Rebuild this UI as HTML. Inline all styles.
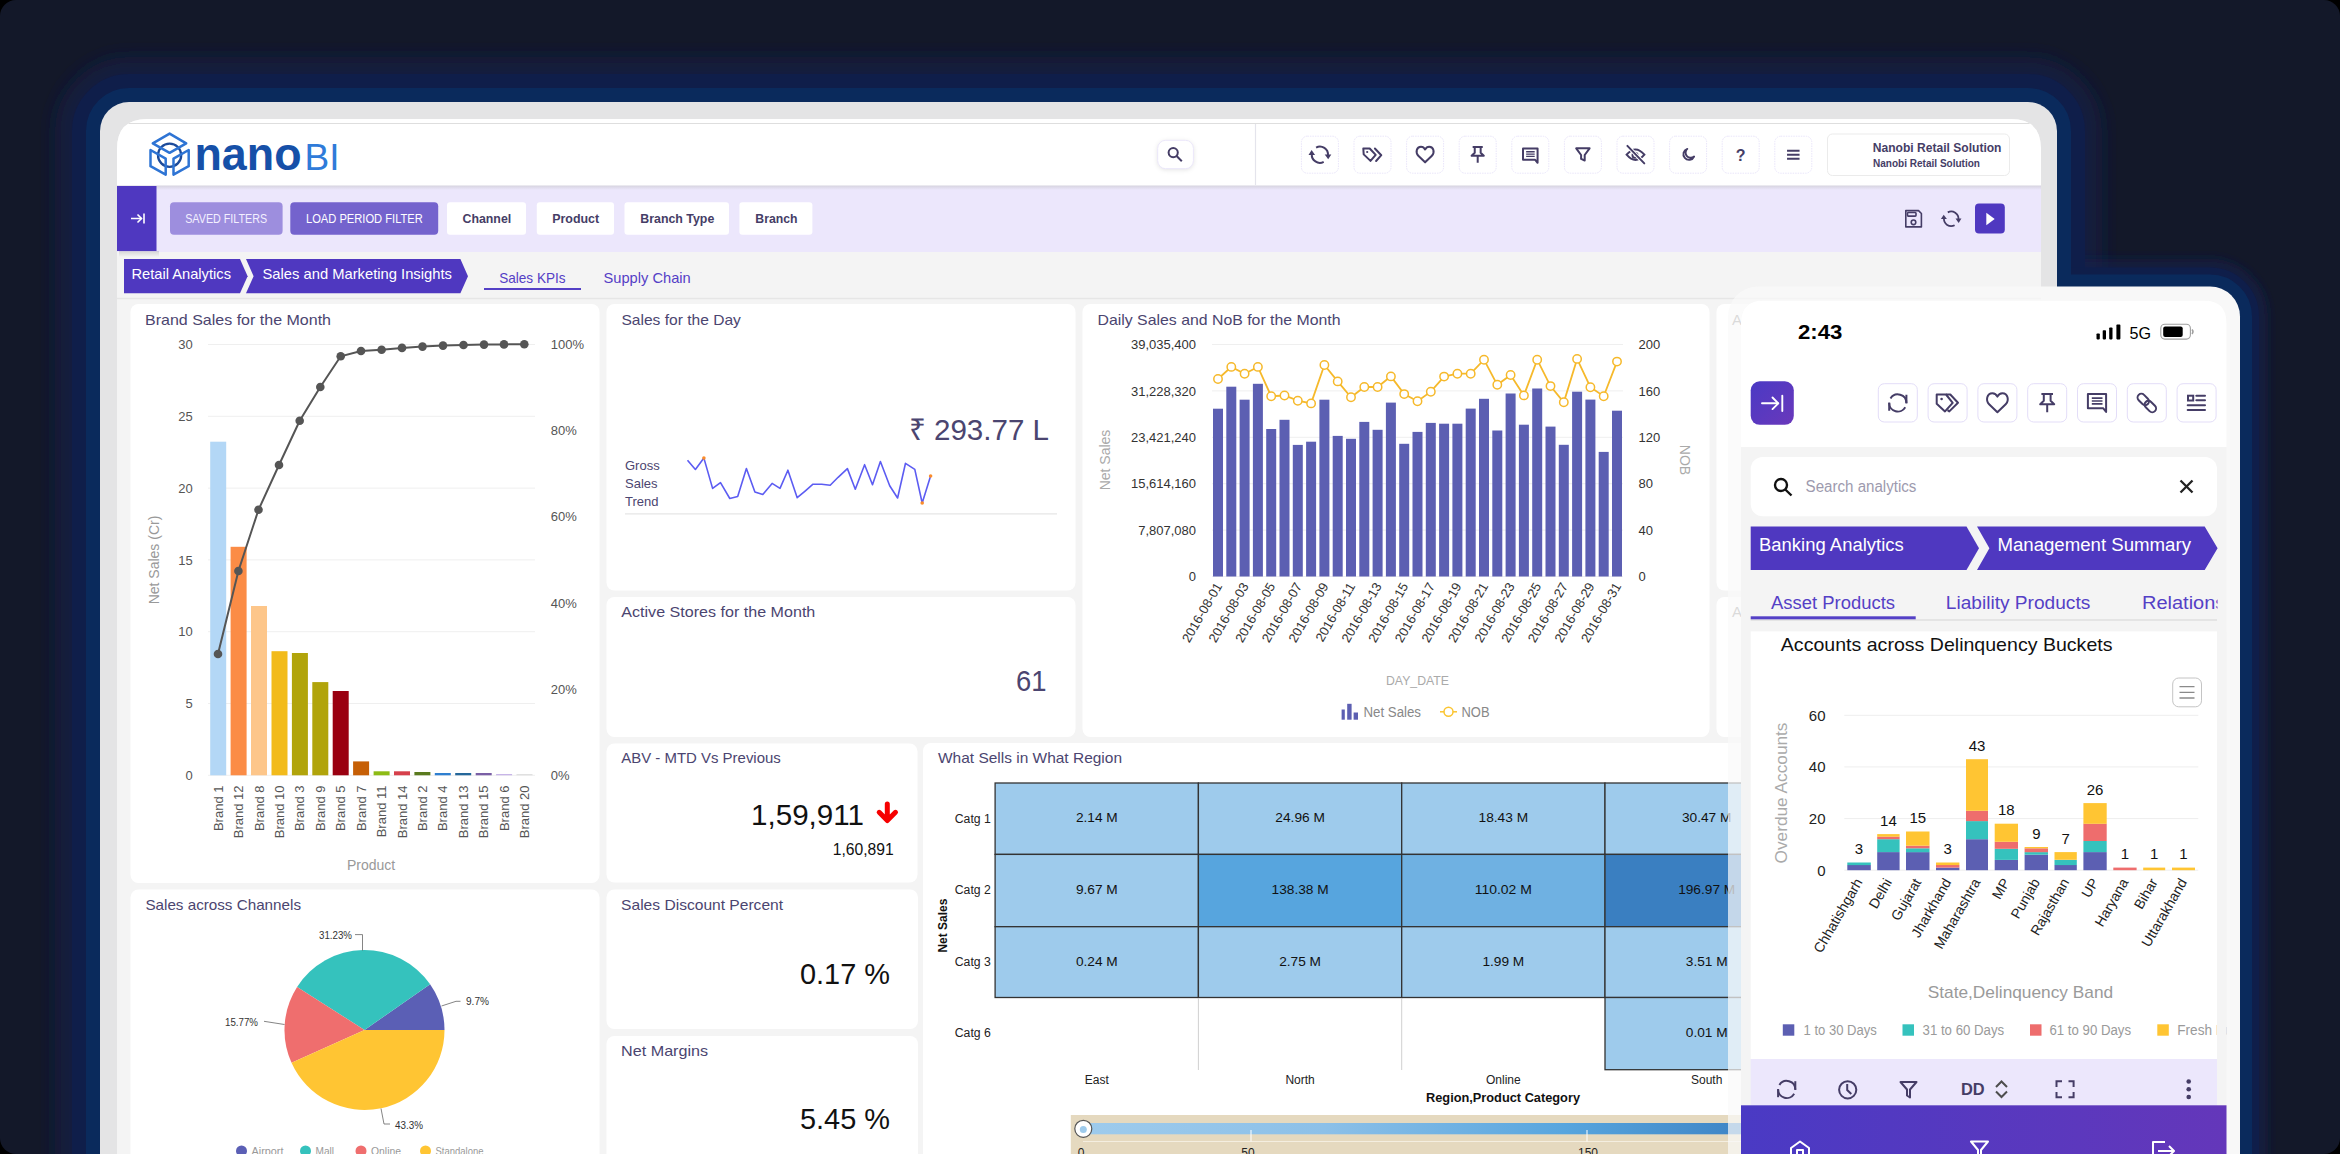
<!DOCTYPE html>
<html><head><meta charset="utf-8"><title>nanoBI</title>
<style>
html,body{margin:0;padding:0;background:#000;width:2340px;height:1154px;overflow:hidden}
#bg{position:absolute;left:0;top:0;width:2340px;height:1154px;background:#131829;border-radius:16px;overflow:hidden}
.glow{position:absolute}
svg{position:absolute;left:0;top:0}
svg text{font-family:"Liberation Sans", sans-serif}
</style></head><body>
<div id="bg">
<svg width="2340" height="1154" viewBox="0 0 2340 1154">
<defs>
<clipPath id="scr"><path d="M117,149 Q117,119 147,119 L2011,119 Q2041,119 2041,149 L2041,1154 L117,1154 Z"/></clipPath>
<clipPath id="pscr"><path d="M1741,323 Q1741,300.5 1763.5,300.5 L2204,300.5 Q2226.5,300.5 2226.5,323 L2226.5,1154 L1741,1154 Z"/></clipPath>
<linearGradient id="pg" x1="0" y1="0" x2="1" y2="1"><stop offset="0" stop-color="#4a3ac4"/><stop offset="1" stop-color="#6a38bb"/></linearGradient>
<linearGradient id="navg" x1="0" y1="0" x2="1" y2="0"><stop offset="0" stop-color="#4a3ac4"/><stop offset="1" stop-color="#6437ba"/></linearGradient>
<linearGradient id="heatg" x1="0" y1="0" x2="1" y2="0"><stop offset="0" stop-color="#9ecbec"/><stop offset="0.35" stop-color="#8cc0e8"/><stop offset="0.7" stop-color="#57a5de"/><stop offset="1" stop-color="#3a7fc1"/></linearGradient>
<filter id="gblur" x="-10%" y="-10%" width="120%" height="120%"><feGaussianBlur stdDeviation="9"/></filter><filter id="gblur2" x="-10%" y="-10%" width="120%" height="120%"><feGaussianBlur stdDeviation="5"/></filter>
</defs>
<path d="M100,1300 L100,131 A29,29 0 0 1 129,102 L2028,102 A29,29 0 0 1 2057,131 L2057,1300 Z" fill="none" stroke="rgba(14,30,78,0.55)" stroke-width="90" stroke-linejoin="round" filter="url(#gblur)"/>
<path d="M1728,1300 L1728,316.5 A30,30 0 0 1 1758,286.5 L2210,286.5 A30,30 0 0 1 2240,316.5 L2240,1300 Z" fill="none" stroke="rgba(14,30,78,0.55)" stroke-width="56" stroke-linejoin="round" filter="url(#gblur2)"/>
<path d="M100,1300 L100,131 A29,29 0 0 1 129,102 L2028,102 A29,29 0 0 1 2057,131 L2057,1300 Z" fill="none" stroke="#0f1e4a" stroke-width="56" stroke-linejoin="round"/>
<path d="M1728,1300 L1728,316.5 A30,30 0 0 1 1758,286.5 L2210,286.5 A30,30 0 0 1 2240,316.5 L2240,1300 Z" fill="none" stroke="#0f1e4a" stroke-width="38" stroke-linejoin="round"/>
<path d="M100,1300 L100,131 A29,29 0 0 1 129,102 L2028,102 A29,29 0 0 1 2057,131 L2057,1300 Z" fill="none" stroke="#0a2a5c" stroke-width="28" stroke-linejoin="round"/>
<path d="M1728,1300 L1728,316.5 A30,30 0 0 1 1758,286.5 L2210,286.5 A30,30 0 0 1 2240,316.5 L2240,1300 Z" fill="none" stroke="#0a2a5c" stroke-width="24" stroke-linejoin="round"/>
<!-- tablet frame -->
<rect x="100" y="102" width="1957" height="1200" rx="29" fill="#e4e4e5"/>
<g clip-path="url(#scr)">
<rect x="117" y="119" width="1924" height="1100" fill="#f4f4f4"/>
<rect x="117.0" y="119.0" width="1924.0" height="67.0" fill="#ffffff"/>
<line x1="117" y1="123.5" x2="2041" y2="123.5" stroke="#dedede" stroke-width="1"/>
<line x1="1255.5" y1="124" x2="1255.5" y2="185" stroke="#e4e4ec" stroke-width="1.2"/>
<circle cx="169.6" cy="155.2" r="11.6" fill="none" stroke="#1d4b9a" stroke-width="2.3"/>
<g fill="none" stroke="#2e74d4" stroke-width="2.5" stroke-linejoin="round" stroke-linecap="round"><path d="M169.6,133.6 L186.2,143.4 L169.6,152.8 L152.8,143.4 Z"/><path d="M150.5,150 L150.5,166.2 L165.7,174.6 L165.7,158.6 Z"/><path d="M188.7,150 L188.7,166.2 L173.5,174.6 L173.5,158.6 Z"/></g>
<text x="194.5" y="170.3" font-size="46" fill="#1650a8" font-weight="bold" textLength="107" lengthAdjust="spacingAndGlyphs">nano</text>
<text x="304.5" y="170.3" font-size="36" fill="#2f7bd9" textLength="35" lengthAdjust="spacingAndGlyphs">BI</text>
<rect x="1157.7" y="140.3" width="35.7" height="28.4" rx="8" fill="#fff" stroke="#ebe7fa" stroke-width="1" style="filter:drop-shadow(0 1px 2px rgba(0,0,0,0.10))"/>
<g fill="none" stroke="#453d66" stroke-width="2"><circle cx="1173.2" cy="152.6" r="4.6"/><line x1="1176.6" y1="156" x2="1181.8" y2="161.3"/></g>
<rect x="1301.4" y="136.2" width="37" height="37" rx="6" fill="#fff" stroke="#e9e5fa" stroke-width="1" stroke-dasharray="1.5,1"/>
<g fill="none" stroke="#453d66" stroke-width="2.0"><path d="M1316.10,147.55 A8.10,8.10 0 0 1 1327.97,155.41"/><path d="M1323.70,161.85 A8.10,8.10 0 0 1 1311.83,153.99"/></g><g fill="#453d66"><polygon points="1324.70,154.40 1331.30,154.40 1328.20,159.30"/><polygon points="1308.50,155.00 1315.10,155.00 1311.60,150.10"/></g>
<rect x="1354.0" y="136.2" width="37" height="37" rx="6" fill="#fff" stroke="#e9e5fa" stroke-width="1" stroke-dasharray="1.5,1"/>
<g fill="none" stroke="#453d66" stroke-width="2.0" stroke-linejoin="round" stroke-linecap="round"><polygon points="1363.30,148.50 1369.70,148.50 1375.70,154.90 1370.50,160.90 1363.70,154.40"/><polyline points="1374.90,148.50 1381.30,155.20 1376.10,161.00"/></g><circle cx="1367.20" cy="152.00" r="1.10" fill="#453d66"/>
<rect x="1406.6" y="136.2" width="37" height="37" rx="6" fill="#fff" stroke="#e9e5fa" stroke-width="1" stroke-dasharray="1.5,1"/>
<path d="M1425.10,162.33 L1418.29,155.68 C1415.26,152.65 1416.49,146.66 1421.00,146.66 C1423.05,146.66 1424.44,148.14 1425.10,149.45 C1425.76,148.14 1427.15,146.66 1429.20,146.66 C1433.71,146.66 1434.94,152.65 1431.91,155.68 Z" fill="none" stroke="#453d66" stroke-width="2.0" stroke-linejoin="round"/>
<rect x="1459.2" y="136.2" width="37" height="37" rx="6" fill="#fff" stroke="#e9e5fa" stroke-width="1" stroke-dasharray="1.5,1"/>
<g fill="none" stroke="#453d66" stroke-width="2.0" stroke-linejoin="round" stroke-linecap="butt"><polyline points="1472.65,146.96 1482.75,146.96"/><polyline points="1474.74,146.96 1474.74,152.79 1471.61,155.83 1483.79,155.83 1480.66,152.79 1480.66,146.96"/><polyline points="1477.70,155.83 1477.70,162.79"/></g>
<rect x="1511.8" y="136.2" width="37" height="37" rx="6" fill="#fff" stroke="#e9e5fa" stroke-width="1" stroke-dasharray="1.5,1"/>
<polygon points="1523.02,148.58 1537.58,148.58 1537.58,162.82 1535.18,159.86 1523.02,159.86" fill="none" stroke="#453d66" stroke-width="2.0" stroke-linejoin="round"/><g stroke="#453d66" stroke-width="1.36"><line x1="1526.14" y1="151.78" x2="1534.70" y2="151.78"/><line x1="1526.14" y1="154.10" x2="1534.70" y2="154.10"/><line x1="1526.14" y1="156.42" x2="1534.70" y2="156.42"/></g>
<rect x="1564.4" y="136.2" width="37" height="37" rx="6" fill="#fff" stroke="#e9e5fa" stroke-width="1" stroke-dasharray="1.5,1"/>
<polygon points="1576.20,148.30 1589.60,148.30 1584.70,155.00 1584.70,160.50 1581.10,158.90 1581.10,155.00" fill="none" stroke="#453d66" stroke-width="2.0" stroke-linejoin="round"/>
<rect x="1617.0" y="136.2" width="37" height="37" rx="6" fill="#fff" stroke="#e9e5fa" stroke-width="1" stroke-dasharray="1.5,1"/>
<g fill="none" stroke="#453d66" stroke-width="2.0" stroke-linecap="round"><path d="M1626.60,154.70 Q1635.50,144.20 1644.40,154.70 Q1635.50,165.20 1626.60,154.70 Z"/><circle cx="1635.00" cy="155.20" r="2.50"/><line x1="1627.40" y1="145.90" x2="1644.30" y2="163.40" stroke="#fff" stroke-width="3.8"/><line x1="1627.40" y1="145.90" x2="1644.30" y2="163.40"/></g>
<rect x="1669.6" y="136.2" width="37" height="37" rx="6" fill="#fff" stroke="#e9e5fa" stroke-width="1" stroke-dasharray="1.5,1"/>
<path d="M1687.30,148.90 A5.6,5.6 0 1 0 1694.10,156.50 A4.6,4.6 0 0 1 1687.30,148.90 Z" fill="none" stroke="#453d66" stroke-width="1.9" stroke-linejoin="round"/>
<rect x="1722.2" y="136.2" width="37" height="37" rx="6" fill="#fff" stroke="#e9e5fa" stroke-width="1" stroke-dasharray="1.5,1"/>
<text x="1740.7" y="160.5" font-size="16" fill="#453d66" font-weight="bold" text-anchor="middle">?</text>
<rect x="1774.8" y="136.2" width="37" height="37" rx="6" fill="#fff" stroke="#e9e5fa" stroke-width="1" stroke-dasharray="1.5,1"/>
<g stroke="#453d66" stroke-width="1.9"><line x1="1787.05" y1="150.70" x2="1799.55" y2="150.70"/><line x1="1787.05" y1="154.70" x2="1799.55" y2="154.70"/><line x1="1787.05" y1="158.70" x2="1799.55" y2="158.70"/></g>
<rect x="1827.5" y="134" width="182" height="41.5" rx="5" fill="#fff" stroke="#ebebeb" stroke-width="1"/>
<text x="2001.5" y="151.6" font-size="13" fill="#453d66" font-weight="bold" text-anchor="end" textLength="128.7" lengthAdjust="spacingAndGlyphs">Nanobi Retail Solution</text>
<text x="1980.0" y="166.5" font-size="11" fill="#453d66" font-weight="bold" text-anchor="end" textLength="107" lengthAdjust="spacingAndGlyphs">Nanobi Retail Solution</text>
<rect x="117.0" y="186.0" width="1924.0" height="66.0" fill="#ece7fc"/>
<linearGradient id="hsh" x1="0" y1="0" x2="0" y2="1"><stop offset="0" stop-color="#d6d3df"/><stop offset="1" stop-color="#ece7fc"/></linearGradient>
<rect x="117.0" y="185.5" width="1924.0" height="4.5" fill="url(#hsh)"/>
<linearGradient id="tsh" x1="0" y1="0" x2="0" y2="1"><stop offset="0" stop-color="#000" stop-opacity="0.13"/><stop offset="1" stop-color="#000" stop-opacity="0"/></linearGradient>
<rect x="119.0" y="251.0" width="40.0" height="6.0" fill="url(#tsh)"/>
<rect x="117.0" y="186.0" width="39.5" height="65.0" fill="#4f38c0"/>
<g stroke="#fff" stroke-width="1.6" fill="none"><line x1="131" y1="218.5" x2="141.5" y2="218.5"/><path d="M137.5,214.5 L141.5,218.5 L137.5,222.5"/><line x1="144" y1="213.5" x2="144" y2="223.5"/></g>
<rect x="170.0" y="202.2" width="112.6" height="32.5" fill="#9d8ede" rx="4"/>
<text x="185.2" y="222.7" font-size="12" fill="#f3f0ff" textLength="82" lengthAdjust="spacingAndGlyphs">SAVED FILTERS</text>
<rect x="290.3" y="202.2" width="147.9" height="32.5" fill="#7463cd" rx="4"/>
<text x="306.0" y="222.7" font-size="12" fill="#ffffff" textLength="116.8" lengthAdjust="spacingAndGlyphs">LOAD PERIOD FILTER</text>
<rect x="447.0" y="202.2" width="79.0" height="32.5" fill="#ffffff" rx="3"/>
<text x="462.5" y="222.7" font-size="12.5" fill="#453d66" font-weight="bold" textLength="48.7" lengthAdjust="spacingAndGlyphs">Channel</text>
<rect x="536.8" y="202.2" width="77.2" height="32.5" fill="#ffffff" rx="3"/>
<text x="552.2" y="222.7" font-size="12.5" fill="#453d66" font-weight="bold" textLength="47.0" lengthAdjust="spacingAndGlyphs">Product</text>
<rect x="624.5" y="202.2" width="104.5" height="32.5" fill="#ffffff" rx="3"/>
<text x="640.3" y="222.7" font-size="12.5" fill="#453d66" font-weight="bold" textLength="74.0" lengthAdjust="spacingAndGlyphs">Branch Type</text>
<rect x="739.4" y="202.2" width="73.0" height="32.5" fill="#ffffff" rx="3"/>
<text x="755.3" y="222.7" font-size="12.5" fill="#453d66" font-weight="bold" textLength="42.2" lengthAdjust="spacingAndGlyphs">Branch</text>
<g fill="none" stroke="#453d66" stroke-width="1.6" stroke-linejoin="round"><path d="M1905.8,210.6 L1918.5,210.6 L1921.4,213.5 L1921.4,226.9 L1905.8,226.9 Z"/><rect x="1907.5" y="212.5" width="8.5" height="3.6" rx="0.8"/><circle cx="1913.5" cy="222.3" r="2.3"/></g>
<g fill="none" stroke="#453d66" stroke-width="1.8"><path d="M1947.78,212.36 A7.29,7.29 0 0 1 1958.46,219.44"/><path d="M1954.62,225.24 A7.29,7.29 0 0 1 1943.94,218.16"/></g><g fill="#453d66"><polygon points="1955.52,218.53 1961.46,218.53 1958.67,222.94"/><polygon points="1940.94,219.07 1946.88,219.07 1943.73,214.66"/></g>
<rect x="1975.0" y="203.5" width="29.8" height="30.0" fill="#4f38c0" rx="4"/>
<path d="M1986.3,212.7 L1994.7,218.9 L1986.3,225.2 Z" fill="#fff"/>
<line x1="117" y1="298.5" x2="2041" y2="298.5" stroke="#e6e6e6" stroke-width="1.5"/>
<path d="M124,259 L240,259 L247.6,276.2 L240,293.3 L124,293.3 Z" fill="#4f38c0"/>
<path d="M246,259 L460.4,259 L468,276.2 L460.4,293.3 L246,293.3 L253.6,276.2 Z" fill="#4f38c0"/>
<text x="131.4" y="279.1" font-size="14.5" fill="#ffffff" textLength="99.6" lengthAdjust="spacingAndGlyphs">Retail Analytics</text>
<text x="262.5" y="279.1" font-size="14.5" fill="#ffffff" textLength="189.4" lengthAdjust="spacingAndGlyphs">Sales and Marketing Insights</text>
<text x="499.2" y="282.6" font-size="14.5" fill="#5440c6" textLength="66.4" lengthAdjust="spacingAndGlyphs">Sales KPIs</text>
<text x="603.5" y="282.6" font-size="14.5" fill="#5440c6" textLength="87.2" lengthAdjust="spacingAndGlyphs">Supply Chain</text>
<rect x="484.0" y="288.0" width="97.0" height="2.0" fill="#5440c6"/>
<rect x="130.5" y="304.0" width="469.0" height="579.0" fill="#ffffff" rx="8"/>
<rect x="606.5" y="304.0" width="469.0" height="286.5" fill="#ffffff" rx="8"/>
<rect x="606.5" y="597.0" width="469.0" height="140.0" fill="#ffffff" rx="8"/>
<rect x="1082.5" y="304.0" width="627.0" height="433.0" fill="#ffffff" rx="8"/>
<rect x="1716.5" y="304.0" width="313.5" height="286.5" fill="#ffffff" rx="8"/>
<rect x="1716.5" y="597.0" width="313.5" height="140.0" fill="#ffffff" rx="8"/>
<rect x="130.5" y="889.5" width="469.0" height="310.5" fill="#ffffff" rx="8"/>
<rect x="606.5" y="743.5" width="311.0" height="139.0" fill="#ffffff" rx="8"/>
<rect x="923.0" y="743.0" width="837.0" height="457.0" fill="#ffffff" rx="8"/>
<rect x="606.5" y="889.5" width="311.5" height="139.5" fill="#ffffff" rx="8"/>
<rect x="606.5" y="1036.0" width="311.5" height="164.0" fill="#ffffff" rx="8"/>
<text x="145.0" y="324.6" font-size="15" fill="#4b4570" textLength="186" lengthAdjust="spacingAndGlyphs">Brand Sales for the Month</text>
<text x="621.4" y="324.6" font-size="15" fill="#4b4570" textLength="119.5" lengthAdjust="spacingAndGlyphs">Sales for the Day</text>
<text x="1097.5" y="324.6" font-size="15" fill="#4b4570" textLength="243" lengthAdjust="spacingAndGlyphs">Daily Sales and NoB for the Month</text>
<text x="621.3" y="617.0" font-size="15" fill="#4b4570" textLength="194" lengthAdjust="spacingAndGlyphs">Active Stores for the Month</text>
<text x="621.3" y="763.2" font-size="15" fill="#4b4570" textLength="159.5" lengthAdjust="spacingAndGlyphs">ABV - MTD Vs Previous</text>
<text x="938.0" y="763.2" font-size="15" fill="#4b4570" textLength="184" lengthAdjust="spacingAndGlyphs">What Sells in What Region</text>
<text x="145.4" y="909.7" font-size="15" fill="#4b4570" textLength="155.6" lengthAdjust="spacingAndGlyphs">Sales across Channels</text>
<text x="621.1" y="910.0" font-size="15" fill="#4b4570" textLength="162" lengthAdjust="spacingAndGlyphs">Sales Discount Percent</text>
<text x="621.1" y="1056.0" font-size="15" fill="#4b4570" textLength="87" lengthAdjust="spacingAndGlyphs">Net Margins</text>
<text x="1732.0" y="324.6" font-size="15" fill="#8a8a8a">A</text>
<text x="1732.0" y="617.0" font-size="15" fill="#8a8a8a">A</text>
<line x1="208" y1="775.3" x2="535" y2="775.3" stroke="#efefef" stroke-width="1"/>
<text x="192.7" y="779.9" font-size="13" fill="#555555" text-anchor="end">0</text>
<line x1="208" y1="703.5" x2="535" y2="703.5" stroke="#efefef" stroke-width="1"/>
<text x="192.7" y="708.1" font-size="13" fill="#555555" text-anchor="end">5</text>
<line x1="208" y1="631.7" x2="535" y2="631.7" stroke="#efefef" stroke-width="1"/>
<text x="192.7" y="636.3" font-size="13" fill="#555555" text-anchor="end">10</text>
<line x1="208" y1="559.9" x2="535" y2="559.9" stroke="#efefef" stroke-width="1"/>
<text x="192.7" y="564.5" font-size="13" fill="#555555" text-anchor="end">15</text>
<line x1="208" y1="488.1" x2="535" y2="488.1" stroke="#efefef" stroke-width="1"/>
<text x="192.7" y="492.7" font-size="13" fill="#555555" text-anchor="end">20</text>
<line x1="208" y1="416.3" x2="535" y2="416.3" stroke="#efefef" stroke-width="1"/>
<text x="192.7" y="420.9" font-size="13" fill="#555555" text-anchor="end">25</text>
<line x1="208" y1="344.5" x2="535" y2="344.5" stroke="#efefef" stroke-width="1"/>
<text x="192.7" y="349.1" font-size="13" fill="#555555" text-anchor="end">30</text>
<text x="550.8" y="779.9" font-size="13" fill="#555555">0%</text>
<text x="550.8" y="693.8" font-size="13" fill="#555555">20%</text>
<text x="550.8" y="607.6" font-size="13" fill="#555555">40%</text>
<text x="550.8" y="521.4" font-size="13" fill="#555555">60%</text>
<text x="550.8" y="435.3" font-size="13" fill="#555555">80%</text>
<text x="550.8" y="349.1" font-size="13" fill="#555555">100%</text>
<rect x="210.2" y="441.7" width="16.0" height="333.6" fill="#b3d7f6"/>
<text transform="translate(222.7,785.5) rotate(-90)" font-size="13" fill="#555555" text-anchor="end">Brand 1</text>
<rect x="230.6" y="546.8" width="16.0" height="228.5" fill="#fb8c46"/>
<text transform="translate(243.1,785.5) rotate(-90)" font-size="13" fill="#555555" text-anchor="end">Brand 12</text>
<rect x="251.0" y="606.0" width="16.0" height="169.3" fill="#fdc68a"/>
<text transform="translate(263.5,785.5) rotate(-90)" font-size="13" fill="#555555" text-anchor="end">Brand 8</text>
<rect x="271.5" y="651.2" width="16.0" height="124.1" fill="#f2bb1b"/>
<text transform="translate(284.0,785.5) rotate(-90)" font-size="13" fill="#555555" text-anchor="end">Brand 10</text>
<rect x="291.9" y="653.0" width="16.0" height="122.3" fill="#b1a40b"/>
<text transform="translate(304.4,785.5) rotate(-90)" font-size="13" fill="#555555" text-anchor="end">Brand 3</text>
<rect x="312.3" y="682.1" width="16.0" height="93.2" fill="#b1a40b"/>
<text transform="translate(324.8,785.5) rotate(-90)" font-size="13" fill="#555555" text-anchor="end">Brand 9</text>
<rect x="332.7" y="691.0" width="16.0" height="84.3" fill="#9a0011"/>
<text transform="translate(345.2,785.5) rotate(-90)" font-size="13" fill="#555555" text-anchor="end">Brand 5</text>
<rect x="353.1" y="761.4" width="16.0" height="13.9" fill="#c65f05"/>
<text transform="translate(365.6,785.5) rotate(-90)" font-size="13" fill="#555555" text-anchor="end">Brand 7</text>
<rect x="373.6" y="771.3" width="16.0" height="4.0" fill="#8dbb15"/>
<text transform="translate(386.1,785.5) rotate(-90)" font-size="13" fill="#555555" text-anchor="end">Brand 11</text>
<rect x="394.0" y="771.3" width="16.0" height="4.0" fill="#d6404b"/>
<text transform="translate(406.5,785.5) rotate(-90)" font-size="13" fill="#555555" text-anchor="end">Brand 14</text>
<rect x="414.4" y="772.0" width="16.0" height="3.3" fill="#5a7a1e"/>
<text transform="translate(426.9,785.5) rotate(-90)" font-size="13" fill="#555555" text-anchor="end">Brand 2</text>
<rect x="434.8" y="773.0" width="16.0" height="2.3" fill="#2e7fd0"/>
<text transform="translate(447.3,785.5) rotate(-90)" font-size="13" fill="#555555" text-anchor="end">Brand 4</text>
<rect x="455.2" y="773.0" width="16.0" height="2.3" fill="#25679a"/>
<text transform="translate(467.7,785.5) rotate(-90)" font-size="13" fill="#555555" text-anchor="end">Brand 13</text>
<rect x="475.7" y="773.0" width="16.0" height="2.3" fill="#7a5fa5"/>
<text transform="translate(488.2,785.5) rotate(-90)" font-size="13" fill="#555555" text-anchor="end">Brand 15</text>
<rect x="496.1" y="774.0" width="16.0" height="1.3" fill="#c8b5e8"/>
<text transform="translate(508.6,785.5) rotate(-90)" font-size="13" fill="#555555" text-anchor="end">Brand 6</text>
<rect x="516.5" y="774.1" width="16.0" height="1.2" fill="#dddddd"/>
<text transform="translate(529.0,785.5) rotate(-90)" font-size="13" fill="#555555" text-anchor="end">Brand 20</text>
<polyline points="218.0,654.0 238.4,571.0 258.5,509.8 279.0,465.0 299.7,420.8 320.3,387.0 340.7,356.3 361.0,351.0 381.6,349.7 402.0,347.9 422.5,346.6 443.0,345.6 463.5,345.0 484.0,344.6 504.0,344.4 524.3,344.2" fill="none" stroke="#555" stroke-width="2"/>
<circle cx="218.0" cy="654.0" r="4.3" fill="#555"/>
<circle cx="238.4" cy="571.0" r="4.3" fill="#555"/>
<circle cx="258.5" cy="509.8" r="4.3" fill="#555"/>
<circle cx="279.0" cy="465.0" r="4.3" fill="#555"/>
<circle cx="299.7" cy="420.8" r="4.3" fill="#555"/>
<circle cx="320.3" cy="387.0" r="4.3" fill="#555"/>
<circle cx="340.7" cy="356.3" r="4.3" fill="#555"/>
<circle cx="361.0" cy="351.0" r="4.3" fill="#555"/>
<circle cx="381.6" cy="349.7" r="4.3" fill="#555"/>
<circle cx="402.0" cy="347.9" r="4.3" fill="#555"/>
<circle cx="422.5" cy="346.6" r="4.3" fill="#555"/>
<circle cx="443.0" cy="345.6" r="4.3" fill="#555"/>
<circle cx="463.5" cy="345.0" r="4.3" fill="#555"/>
<circle cx="484.0" cy="344.6" r="4.3" fill="#555"/>
<circle cx="504.0" cy="344.4" r="4.3" fill="#555"/>
<circle cx="524.3" cy="344.2" r="4.3" fill="#555"/>
<text x="371.0" y="869.5" font-size="14" fill="#999" text-anchor="middle">Product</text>
<text transform="translate(159,560) rotate(-90)" font-size="14" fill="#999" text-anchor="middle">Net Sales (Cr)</text>
<text x="1049.0" y="440.3" font-size="30" fill="#4b4570" text-anchor="end" textLength="140" lengthAdjust="spacingAndGlyphs">₹ 293.77 L</text>
<text x="625.0" y="469.5" font-size="13" fill="#4b4570">Gross</text>
<text x="625.0" y="487.5" font-size="13" fill="#4b4570">Sales</text>
<text x="625.0" y="505.5" font-size="13" fill="#4b4570">Trend</text>
<polyline points="687.5,460.2 695.4,469.4 703.9,458.1 712.6,488.4 720.5,482.6 729.8,498.5 737.7,496.4 746.4,468.6 754.9,491.9 762.8,494.5 772.1,483.4 780.0,488.4 787.9,470.2 797.2,497.7 805.1,491.1 813.0,484.2 821.7,484.2 830.2,485.3 838.1,477.3 847.4,468.6 855.3,489.2 864.6,464.7 872.5,484.7 880.4,461.5 889.7,485.8 897.6,498.0 905.5,463.3 914.8,469.4 922.2,503.0 930.6,476.0" fill="none" stroke="#5c5cf2" stroke-width="1.6" stroke-linejoin="round"/>
<circle cx="703.9" cy="458.1" r="1.8" fill="#fb8c2a"/>
<circle cx="922.2" cy="503.0" r="1.8" fill="#fb8c2a"/>
<circle cx="930.6" cy="476.0" r="1.8" fill="#fb8c2a"/>
<line x1="625" y1="513.8" x2="1057" y2="513.8" stroke="#e6e6e6" stroke-width="1.2"/>
<text x="1046.5" y="691.0" font-size="30" fill="#4b4570" text-anchor="end" textLength="30.5" lengthAdjust="spacingAndGlyphs">61</text>
<line x1="1212" y1="576.5" x2="1623" y2="576.5" stroke="#efefef" stroke-width="1"/>
<text x="1196.0" y="581.1" font-size="13" fill="#333" text-anchor="end">0</text>
<line x1="1212" y1="530.1" x2="1623" y2="530.1" stroke="#efefef" stroke-width="1"/>
<text x="1196.0" y="534.7" font-size="13" fill="#333" text-anchor="end">7,807,080</text>
<line x1="1212" y1="483.7" x2="1623" y2="483.7" stroke="#efefef" stroke-width="1"/>
<text x="1196.0" y="488.3" font-size="13" fill="#333" text-anchor="end">15,614,160</text>
<line x1="1212" y1="437.3" x2="1623" y2="437.3" stroke="#efefef" stroke-width="1"/>
<text x="1196.0" y="441.9" font-size="13" fill="#333" text-anchor="end">23,421,240</text>
<line x1="1212" y1="390.9" x2="1623" y2="390.9" stroke="#efefef" stroke-width="1"/>
<text x="1196.0" y="395.5" font-size="13" fill="#333" text-anchor="end">31,228,320</text>
<line x1="1212" y1="344.5" x2="1623" y2="344.5" stroke="#efefef" stroke-width="1"/>
<text x="1196.0" y="349.1" font-size="13" fill="#333" text-anchor="end">39,035,400</text>
<text x="1638.6" y="581.1" font-size="13" fill="#333">0</text>
<text x="1638.6" y="534.7" font-size="13" fill="#333">40</text>
<text x="1638.6" y="488.3" font-size="13" fill="#333">80</text>
<text x="1638.6" y="441.9" font-size="13" fill="#333">120</text>
<text x="1638.6" y="395.5" font-size="13" fill="#333">160</text>
<text x="1638.6" y="349.1" font-size="13" fill="#333">200</text>
<rect x="1213.0" y="408.7" width="10.0" height="167.8" fill="#5c5fb2"/>
<rect x="1226.3" y="386.7" width="10.0" height="189.8" fill="#5c5fb2"/>
<rect x="1239.6" y="399.7" width="10.0" height="176.8" fill="#5c5fb2"/>
<rect x="1252.9" y="383.8" width="10.0" height="192.7" fill="#5c5fb2"/>
<rect x="1266.2" y="429.0" width="10.0" height="147.5" fill="#5c5fb2"/>
<rect x="1279.5" y="419.8" width="10.0" height="156.7" fill="#5c5fb2"/>
<rect x="1292.8" y="444.9" width="10.0" height="131.6" fill="#5c5fb2"/>
<rect x="1306.1" y="441.7" width="10.0" height="134.8" fill="#5c5fb2"/>
<rect x="1319.4" y="399.7" width="10.0" height="176.8" fill="#5c5fb2"/>
<rect x="1332.7" y="435.9" width="10.0" height="140.6" fill="#5c5fb2"/>
<rect x="1346.0" y="438.8" width="10.0" height="137.7" fill="#5c5fb2"/>
<rect x="1359.3" y="421.9" width="10.0" height="154.6" fill="#5c5fb2"/>
<rect x="1372.6" y="429.8" width="10.0" height="146.7" fill="#5c5fb2"/>
<rect x="1385.9" y="402.6" width="10.0" height="173.9" fill="#5c5fb2"/>
<rect x="1399.2" y="443.8" width="10.0" height="132.7" fill="#5c5fb2"/>
<rect x="1412.5" y="431.9" width="10.0" height="144.6" fill="#5c5fb2"/>
<rect x="1425.8" y="422.9" width="10.0" height="153.6" fill="#5c5fb2"/>
<rect x="1439.1" y="423.7" width="10.0" height="152.8" fill="#5c5fb2"/>
<rect x="1452.4" y="423.7" width="10.0" height="152.8" fill="#5c5fb2"/>
<rect x="1465.7" y="408.6" width="10.0" height="167.9" fill="#5c5fb2"/>
<rect x="1479.0" y="398.8" width="10.0" height="177.7" fill="#5c5fb2"/>
<rect x="1492.3" y="430.5" width="10.0" height="146.0" fill="#5c5fb2"/>
<rect x="1505.6" y="393.5" width="10.0" height="183.0" fill="#5c5fb2"/>
<rect x="1518.9" y="424.7" width="10.0" height="151.8" fill="#5c5fb2"/>
<rect x="1532.2" y="388.5" width="10.0" height="188.0" fill="#5c5fb2"/>
<rect x="1545.5" y="426.6" width="10.0" height="149.9" fill="#5c5fb2"/>
<rect x="1558.8" y="444.8" width="10.0" height="131.7" fill="#5c5fb2"/>
<rect x="1572.1" y="391.7" width="10.0" height="184.8" fill="#5c5fb2"/>
<rect x="1585.4" y="399.6" width="10.0" height="176.9" fill="#5c5fb2"/>
<rect x="1598.7" y="451.9" width="10.0" height="124.6" fill="#5c5fb2"/>
<rect x="1612.0" y="410.7" width="10.0" height="165.8" fill="#5c5fb2"/>
<polyline points="1218.0,379.0 1231.3,366.9 1244.6,373.8 1257.9,366.9 1271.2,396.2 1284.5,395.5 1297.8,400.7 1311.1,403.4 1324.4,365.0 1337.7,381.4 1351.0,397.3 1364.3,387.0 1377.6,387.0 1390.9,376.4 1404.2,394.1 1417.5,401.2 1430.8,391.7 1444.1,376.6 1457.4,373.7 1470.7,373.7 1484.0,359.7 1497.3,384.8 1510.6,375.0 1523.9,395.4 1537.2,359.7 1550.5,386.1 1563.8,402.3 1577.1,358.9 1590.4,387.2 1603.7,396.2 1617.0,361.6" fill="none" stroke="#f6b92b" stroke-width="1.8"/>
<circle cx="1218.0" cy="379.0" r="4.2" fill="#fff" stroke="#f6b92b" stroke-width="1.5"/>
<circle cx="1231.3" cy="366.9" r="4.2" fill="#fff" stroke="#f6b92b" stroke-width="1.5"/>
<circle cx="1244.6" cy="373.8" r="4.2" fill="#fff" stroke="#f6b92b" stroke-width="1.5"/>
<circle cx="1257.9" cy="366.9" r="4.2" fill="#fff" stroke="#f6b92b" stroke-width="1.5"/>
<circle cx="1271.2" cy="396.2" r="4.2" fill="#fff" stroke="#f6b92b" stroke-width="1.5"/>
<circle cx="1284.5" cy="395.5" r="4.2" fill="#fff" stroke="#f6b92b" stroke-width="1.5"/>
<circle cx="1297.8" cy="400.7" r="4.2" fill="#fff" stroke="#f6b92b" stroke-width="1.5"/>
<circle cx="1311.1" cy="403.4" r="4.2" fill="#fff" stroke="#f6b92b" stroke-width="1.5"/>
<circle cx="1324.4" cy="365.0" r="4.2" fill="#fff" stroke="#f6b92b" stroke-width="1.5"/>
<circle cx="1337.7" cy="381.4" r="4.2" fill="#fff" stroke="#f6b92b" stroke-width="1.5"/>
<circle cx="1351.0" cy="397.3" r="4.2" fill="#fff" stroke="#f6b92b" stroke-width="1.5"/>
<circle cx="1364.3" cy="387.0" r="4.2" fill="#fff" stroke="#f6b92b" stroke-width="1.5"/>
<circle cx="1377.6" cy="387.0" r="4.2" fill="#fff" stroke="#f6b92b" stroke-width="1.5"/>
<circle cx="1390.9" cy="376.4" r="4.2" fill="#fff" stroke="#f6b92b" stroke-width="1.5"/>
<circle cx="1404.2" cy="394.1" r="4.2" fill="#fff" stroke="#f6b92b" stroke-width="1.5"/>
<circle cx="1417.5" cy="401.2" r="4.2" fill="#fff" stroke="#f6b92b" stroke-width="1.5"/>
<circle cx="1430.8" cy="391.7" r="4.2" fill="#fff" stroke="#f6b92b" stroke-width="1.5"/>
<circle cx="1444.1" cy="376.6" r="4.2" fill="#fff" stroke="#f6b92b" stroke-width="1.5"/>
<circle cx="1457.4" cy="373.7" r="4.2" fill="#fff" stroke="#f6b92b" stroke-width="1.5"/>
<circle cx="1470.7" cy="373.7" r="4.2" fill="#fff" stroke="#f6b92b" stroke-width="1.5"/>
<circle cx="1484.0" cy="359.7" r="4.2" fill="#fff" stroke="#f6b92b" stroke-width="1.5"/>
<circle cx="1497.3" cy="384.8" r="4.2" fill="#fff" stroke="#f6b92b" stroke-width="1.5"/>
<circle cx="1510.6" cy="375.0" r="4.2" fill="#fff" stroke="#f6b92b" stroke-width="1.5"/>
<circle cx="1523.9" cy="395.4" r="4.2" fill="#fff" stroke="#f6b92b" stroke-width="1.5"/>
<circle cx="1537.2" cy="359.7" r="4.2" fill="#fff" stroke="#f6b92b" stroke-width="1.5"/>
<circle cx="1550.5" cy="386.1" r="4.2" fill="#fff" stroke="#f6b92b" stroke-width="1.5"/>
<circle cx="1563.8" cy="402.3" r="4.2" fill="#fff" stroke="#f6b92b" stroke-width="1.5"/>
<circle cx="1577.1" cy="358.9" r="4.2" fill="#fff" stroke="#f6b92b" stroke-width="1.5"/>
<circle cx="1590.4" cy="387.2" r="4.2" fill="#fff" stroke="#f6b92b" stroke-width="1.5"/>
<circle cx="1603.7" cy="396.2" r="4.2" fill="#fff" stroke="#f6b92b" stroke-width="1.5"/>
<circle cx="1617.0" cy="361.6" r="4.2" fill="#fff" stroke="#f6b92b" stroke-width="1.5"/>
<text transform="translate(1222.5,586) rotate(-60)" font-size="13" fill="#333" text-anchor="end">2016-08-01</text>
<text transform="translate(1249.1,586) rotate(-60)" font-size="13" fill="#333" text-anchor="end">2016-08-03</text>
<text transform="translate(1275.7,586) rotate(-60)" font-size="13" fill="#333" text-anchor="end">2016-08-05</text>
<text transform="translate(1302.3,586) rotate(-60)" font-size="13" fill="#333" text-anchor="end">2016-08-07</text>
<text transform="translate(1328.9,586) rotate(-60)" font-size="13" fill="#333" text-anchor="end">2016-08-09</text>
<text transform="translate(1355.5,586) rotate(-60)" font-size="13" fill="#333" text-anchor="end">2016-08-11</text>
<text transform="translate(1382.1,586) rotate(-60)" font-size="13" fill="#333" text-anchor="end">2016-08-13</text>
<text transform="translate(1408.7,586) rotate(-60)" font-size="13" fill="#333" text-anchor="end">2016-08-15</text>
<text transform="translate(1435.3,586) rotate(-60)" font-size="13" fill="#333" text-anchor="end">2016-08-17</text>
<text transform="translate(1461.9,586) rotate(-60)" font-size="13" fill="#333" text-anchor="end">2016-08-19</text>
<text transform="translate(1488.5,586) rotate(-60)" font-size="13" fill="#333" text-anchor="end">2016-08-21</text>
<text transform="translate(1515.1,586) rotate(-60)" font-size="13" fill="#333" text-anchor="end">2016-08-23</text>
<text transform="translate(1541.7,586) rotate(-60)" font-size="13" fill="#333" text-anchor="end">2016-08-25</text>
<text transform="translate(1568.3,586) rotate(-60)" font-size="13" fill="#333" text-anchor="end">2016-08-27</text>
<text transform="translate(1594.9,586) rotate(-60)" font-size="13" fill="#333" text-anchor="end">2016-08-29</text>
<text transform="translate(1621.5,586) rotate(-60)" font-size="13" fill="#333" text-anchor="end">2016-08-31</text>
<text transform="translate(1110,460) rotate(-90)" font-size="14" fill="#aaa" text-anchor="middle">Net Sales</text>
<text transform="translate(1680,460) rotate(90)" font-size="14" fill="#aaa" text-anchor="middle">NOB</text>
<text x="1417.5" y="684.8" font-size="13" fill="#aaa" text-anchor="middle" textLength="63" lengthAdjust="spacingAndGlyphs">DAY_DATE</text>
<rect x="1341.6" y="709.5" width="3.2" height="10.2" fill="#5c5fb2"/><rect x="1347.2" y="703.8" width="4.4" height="15.9" fill="#5c5fb2"/><rect x="1353.6" y="712.5" width="4.4" height="7.2" fill="#5c5fb2"/>
<text x="1363.5" y="717.0" font-size="14" fill="#888" textLength="57.5" lengthAdjust="spacingAndGlyphs">Net Sales</text>
<line x1="1440" y1="711.8" x2="1457" y2="711.8" stroke="#fbc531" stroke-width="1.5"/><circle cx="1448.5" cy="711.8" r="4.5" fill="#fff" stroke="#fbc531" stroke-width="1.5"/>
<text x="1461.5" y="717.0" font-size="14" fill="#888" textLength="28" lengthAdjust="spacingAndGlyphs">NOB</text>
<text x="864.0" y="825.4" font-size="30" fill="#111" text-anchor="end" textLength="113" lengthAdjust="spacingAndGlyphs">1,59,911</text>
<path d="M887.3,804 L887.3,819 M879.2,812.3 L887.3,820.5 L895.5,812.3" fill="none" stroke="#f60000" stroke-width="5" stroke-linecap="round" stroke-linejoin="round"/>
<text x="893.7" y="854.5" font-size="16" fill="#111" text-anchor="end" textLength="61" lengthAdjust="spacingAndGlyphs">1,60,891</text>
<text x="890.0" y="984.3" font-size="30" fill="#111" text-anchor="end" textLength="90" lengthAdjust="spacingAndGlyphs">0.17 %</text>
<text x="890.0" y="1129.4" font-size="30" fill="#111" text-anchor="end" textLength="90" lengthAdjust="spacingAndGlyphs">5.45 %</text>
<path d="M364.5,1030 L444.50,1030.00 A80,80 0 0 0 430.11,984.23 Z" fill="#5b5fb5"/>
<path d="M364.5,1030 L430.11,984.23 A80,80 0 0 0 297.10,986.90 Z" fill="#35c2bd"/>
<path d="M364.5,1030 L297.10,986.90 A80,80 0 0 0 291.53,1062.79 Z" fill="#ef6e6e"/>
<path d="M364.5,1030 L291.53,1062.79 A80,80 0 0 0 444.50,1030.00 Z" fill="#ffc533"/>
<polyline points="355,934.6 362.5,934.6 362.5,950.5" fill="none" stroke="#666" stroke-width="0.8"/>
<text x="352.0" y="938.6" font-size="11" fill="#333" text-anchor="end" textLength="33" lengthAdjust="spacingAndGlyphs">31.23%</text>
<polyline points="441.5,1006 456,1001.3 460.5,1001.3" fill="none" stroke="#666" stroke-width="0.8"/>
<text x="466.0" y="1005.0" font-size="11" fill="#333" textLength="23" lengthAdjust="spacingAndGlyphs">9.7%</text>
<polyline points="264,1021.3 284.5,1024.5" fill="none" stroke="#666" stroke-width="0.8"/>
<text x="258.0" y="1025.5" font-size="11" fill="#333" text-anchor="end" textLength="33" lengthAdjust="spacingAndGlyphs">15.77%</text>
<polyline points="381,1108.5 384,1124 390,1124" fill="none" stroke="#666" stroke-width="0.8"/>
<text x="395.0" y="1128.5" font-size="11" fill="#333" textLength="28" lengthAdjust="spacingAndGlyphs">43.3%</text>
<circle cx="241.5" cy="1151" r="5.5" fill="#5b5fb5"/>
<text x="251.5" y="1155.0" font-size="11" fill="#999" textLength="32" lengthAdjust="spacingAndGlyphs">Airport</text>
<circle cx="305.5" cy="1151" r="5.5" fill="#35c2bd"/>
<text x="315.5" y="1155.0" font-size="11" fill="#999" textLength="18.5" lengthAdjust="spacingAndGlyphs">Mall</text>
<circle cx="361" cy="1151" r="5.5" fill="#ef6e6e"/>
<text x="371.0" y="1155.0" font-size="11" fill="#999" textLength="30" lengthAdjust="spacingAndGlyphs">Online</text>
<circle cx="425.5" cy="1151" r="5.5" fill="#ffc533"/>
<text x="435.5" y="1155.0" font-size="11" fill="#999" textLength="48" lengthAdjust="spacingAndGlyphs">Standalone</text>
<rect x="995.1" y="783" width="203.3" height="71.4" fill="#9ecbec" stroke="#333" stroke-width="1.3"/>
<text x="1096.8" y="822.3" font-size="13" fill="#111" text-anchor="middle" textLength="41.8" lengthAdjust="spacingAndGlyphs">2.14 M</text>
<rect x="1198.4" y="783" width="203.3" height="71.4" fill="#9ecbec" stroke="#333" stroke-width="1.3"/>
<text x="1300.1" y="822.3" font-size="13" fill="#111" text-anchor="middle" textLength="49.5" lengthAdjust="spacingAndGlyphs">24.96 M</text>
<rect x="1401.7" y="783" width="203.3" height="71.4" fill="#9ecbec" stroke="#333" stroke-width="1.3"/>
<text x="1503.3" y="822.3" font-size="13" fill="#111" text-anchor="middle" textLength="49.5" lengthAdjust="spacingAndGlyphs">18.43 M</text>
<rect x="1605" y="783" width="203.3" height="71.4" fill="#9ecbec" stroke="#333" stroke-width="1.3"/>
<text x="1706.7" y="822.3" font-size="13" fill="#111" text-anchor="middle" textLength="49.5" lengthAdjust="spacingAndGlyphs">30.47 M</text>
<rect x="995.1" y="854.4" width="203.3" height="72.3" fill="#9ecbec" stroke="#333" stroke-width="1.3"/>
<text x="1096.8" y="894.1" font-size="13" fill="#111" text-anchor="middle" textLength="41.8" lengthAdjust="spacingAndGlyphs">9.67 M</text>
<rect x="1198.4" y="854.4" width="203.3" height="72.3" fill="#57a5de" stroke="#333" stroke-width="1.3"/>
<text x="1300.1" y="894.1" font-size="13" fill="#111" text-anchor="middle" textLength="57.1" lengthAdjust="spacingAndGlyphs">138.38 M</text>
<rect x="1401.7" y="854.4" width="203.3" height="72.3" fill="#6fb1e2" stroke="#333" stroke-width="1.3"/>
<text x="1503.3" y="894.1" font-size="13" fill="#111" text-anchor="middle" textLength="57.1" lengthAdjust="spacingAndGlyphs">110.02 M</text>
<rect x="1605" y="854.4" width="203.3" height="72.3" fill="#3a7fc1" stroke="#333" stroke-width="1.3"/>
<text x="1706.7" y="894.1" font-size="13" fill="#111" text-anchor="middle" textLength="57.1" lengthAdjust="spacingAndGlyphs">196.97 M</text>
<rect x="995.1" y="926.7" width="203.3" height="70.8" fill="#9ecbec" stroke="#333" stroke-width="1.3"/>
<text x="1096.8" y="965.7" font-size="13" fill="#111" text-anchor="middle" textLength="41.8" lengthAdjust="spacingAndGlyphs">0.24 M</text>
<rect x="1198.4" y="926.7" width="203.3" height="70.8" fill="#9ecbec" stroke="#333" stroke-width="1.3"/>
<text x="1300.1" y="965.7" font-size="13" fill="#111" text-anchor="middle" textLength="41.8" lengthAdjust="spacingAndGlyphs">2.75 M</text>
<rect x="1401.7" y="926.7" width="203.3" height="70.8" fill="#9ecbec" stroke="#333" stroke-width="1.3"/>
<text x="1503.3" y="965.7" font-size="13" fill="#111" text-anchor="middle" textLength="41.8" lengthAdjust="spacingAndGlyphs">1.99 M</text>
<rect x="1605" y="926.7" width="203.3" height="70.8" fill="#9ecbec" stroke="#333" stroke-width="1.3"/>
<text x="1706.7" y="965.7" font-size="13" fill="#111" text-anchor="middle" textLength="41.8" lengthAdjust="spacingAndGlyphs">3.51 M</text>
<rect x="1605" y="997.5" width="203.3" height="72.2" fill="#9ecbec" stroke="#333" stroke-width="1.3"/>
<text x="1706.7" y="1037.2" font-size="13" fill="#111" text-anchor="middle" textLength="41.8" lengthAdjust="spacingAndGlyphs">0.01 M</text>
<line x1="1198.4" y1="998" x2="1198.4" y2="1070" stroke="#d0d0d0" stroke-width="1"/>
<line x1="1401.7" y1="998" x2="1401.7" y2="1070" stroke="#d0d0d0" stroke-width="1"/>
<text x="990.8" y="822.5" font-size="12" fill="#222" text-anchor="end" textLength="36" lengthAdjust="spacingAndGlyphs">Catg 1</text>
<text x="990.8" y="894.3" font-size="12" fill="#222" text-anchor="end" textLength="36" lengthAdjust="spacingAndGlyphs">Catg 2</text>
<text x="990.8" y="965.9" font-size="12" fill="#222" text-anchor="end" textLength="36" lengthAdjust="spacingAndGlyphs">Catg 3</text>
<text x="990.8" y="1037.4" font-size="12" fill="#222" text-anchor="end" textLength="36" lengthAdjust="spacingAndGlyphs">Catg 6</text>
<text x="1096.8" y="1083.8" font-size="12" fill="#222" text-anchor="middle">East</text>
<text x="1300.1" y="1083.8" font-size="12" fill="#222" text-anchor="middle">North</text>
<text x="1503.3" y="1083.8" font-size="12" fill="#222" text-anchor="middle">Online</text>
<text x="1706.7" y="1083.8" font-size="12" fill="#222" text-anchor="middle">South</text>
<text x="1503.0" y="1102.0" font-size="12" fill="#111" font-weight="bold" text-anchor="middle" textLength="154" lengthAdjust="spacingAndGlyphs">Region,Product Category</text>
<text transform="translate(946.5,925.6) rotate(-90)" font-size="12" font-weight="bold" fill="#111" text-anchor="middle">Net Sales</text>
<rect x="1070.8" y="1115.0" width="700.0" height="60.0" fill="#e5d9bf"/>
<rect x="1082.0" y="1123.0" width="690.0" height="11.3" fill="url(#heatg)"/>
<line x1="1083" y1="1141.5" x2="1770" y2="1141.5" stroke="#f4eee0" stroke-width="1"/>
<line x1="1251" y1="1130" x2="1251" y2="1141.5" stroke="#fff" stroke-width="1"/>
<line x1="1587" y1="1130" x2="1587" y2="1141.5" stroke="#fff" stroke-width="1"/>
<circle cx="1083.3" cy="1128.8" r="8.5" fill="#fff" stroke="#555" stroke-width="1.2"/><circle cx="1083.3" cy="1129.5" r="3.5" fill="#9ecbec"/>
<text x="1081.0" y="1157.0" font-size="12" fill="#222" text-anchor="middle">0</text>
<text x="1248.0" y="1157.0" font-size="12" fill="#222" text-anchor="middle">50</text>
<text x="1588.0" y="1157.0" font-size="12" fill="#222" text-anchor="middle">150</text>
</g>
<!-- phone -->
<clipPath id="pfl"><rect x="1700" y="250" width="341" height="950"/></clipPath><clipPath id="pfr"><rect x="2041" y="250" width="250" height="950"/></clipPath>
<rect x="1728" y="286.5" width="512" height="1000" rx="30" fill="#fafafa" fill-opacity="0.72" clip-path="url(#pfl)"/>
<rect x="1728" y="286.5" width="512" height="1000" rx="30" fill="#f8f8f8" clip-path="url(#pfr)"/>
<g clip-path="url(#pscr)">
<rect x="1741.0" y="300.5" width="486.0" height="860.0" fill="#f4f4f4"/>
<rect x="1741.0" y="300.5" width="486.0" height="146.5" fill="#ffffff"/>
<text x="1798.0" y="339.4" font-size="20.5" fill="#000" font-weight="bold" textLength="44.4" lengthAdjust="spacingAndGlyphs">2:43</text>
<rect x="2096.5" y="333.4" width="3.3" height="6.0" fill="#000" rx="0.8"/>
<rect x="2102.7" y="330.3" width="3.3" height="9.1" fill="#000" rx="0.8"/>
<rect x="2109.2" y="327.4" width="3.3" height="12.0" fill="#000" rx="0.8"/>
<rect x="2116.4" y="324.6" width="4.0" height="14.8" fill="#000" rx="0.8"/>
<text x="2129.5" y="339.4" font-size="17" fill="#000" textLength="21.5" lengthAdjust="spacingAndGlyphs">5G</text>
<rect x="2160.8" y="324.3" width="29.6" height="14.8" rx="4" fill="none" stroke="#a0a0a0" stroke-width="1.1"/>
<rect x="2163.2" y="326.6" width="19.5" height="10.3" fill="#000" rx="2"/>
<path d="M2192,329.5 Q2194,331.7 2192,334" fill="none" stroke="#a0a0a0" stroke-width="1.5"/>
<rect x="1750.7" y="381.3" width="43.1" height="43.5" rx="9" fill="url(#pg)"/>
<g stroke="#fff" stroke-width="1.9" fill="none" stroke-linecap="round" stroke-linejoin="round"><line x1="1762" y1="403.3" x2="1778" y2="403.3"/><path d="M1772.5,397.5 L1778.3,403.3 L1772.5,409.1"/><line x1="1782.3" y1="395.7" x2="1782.3" y2="411"/></g>
<rect x="1878.3" y="383.7" width="39" height="38.3" rx="6" fill="#fff" stroke="#e3ddf8" stroke-width="1"/>
<g fill="none" stroke="#453d66" stroke-width="2.0"><path d="M1890.51,398.44 A8.60,8.60 0 0 1 1906.40,403.00"/><path d="M1905.25,407.30 A8.60,8.60 0 0 1 1889.20,403.00"/><path d="M1906.40,403.50 L1906.40,394.70"/><path d="M1889.20,402.50 L1889.20,410.70"/></g>
<rect x="1928.1" y="383.7" width="39" height="38.3" rx="6" fill="#fff" stroke="#e3ddf8" stroke-width="1"/>
<g fill="none" stroke="#453d66" stroke-width="2.0" stroke-linejoin="round"><polygon points="1936.70,394.50 1946.00,394.50 1952.70,402.80 1945.00,411.40 1936.70,403.70"/><polyline points="1946.00,394.50 1950.30,394.50 1958.00,402.80 1949.30,411.40 1947.50,410.20"/></g><circle cx="1941.60" cy="399.00" r="1.30" fill="#453d66"/>
<rect x="1977.9" y="383.7" width="39" height="38.3" rx="6" fill="#fff" stroke="#e3ddf8" stroke-width="1"/>
<path d="M1997.40,412.30 L1989.10,404.20 C1985.40,400.50 1986.90,393.20 1992.40,393.20 C1994.90,393.20 1996.60,395.00 1997.40,396.60 C1998.20,395.00 1999.90,393.20 2002.40,393.20 C2007.90,393.20 2009.40,400.50 2005.70,404.20 Z" fill="none" stroke="#453d66" stroke-width="2.0" stroke-linejoin="round"/>
<rect x="2027.7" y="383.7" width="39" height="38.3" rx="6" fill="#fff" stroke="#e3ddf8" stroke-width="1"/>
<g fill="none" stroke="#453d66" stroke-width="2.0" stroke-linejoin="round" stroke-linecap="butt"><polyline points="2041.40,394.10 2053.00,394.10"/><polyline points="2043.80,394.10 2043.80,400.80 2040.20,404.30 2054.20,404.30 2050.60,400.80 2050.60,394.10"/><polyline points="2047.20,404.30 2047.20,412.30"/></g>
<rect x="2077.5" y="383.7" width="39" height="38.3" rx="6" fill="#fff" stroke="#e3ddf8" stroke-width="1"/>
<polygon points="2087.90,394.10 2106.10,394.10 2106.10,411.90 2103.10,408.20 2087.90,408.20" fill="none" stroke="#453d66" stroke-width="2.0" stroke-linejoin="round"/><g stroke="#453d66" stroke-width="1.70"><line x1="2091.80" y1="398.10" x2="2102.50" y2="398.10"/><line x1="2091.80" y1="401.00" x2="2102.50" y2="401.00"/><line x1="2091.80" y1="403.90" x2="2102.50" y2="403.90"/></g>
<rect x="2127.3" y="383.7" width="39" height="38.3" rx="6" fill="#fff" stroke="#e3ddf8" stroke-width="1"/>
<g fill="none" stroke="#453d66" stroke-width="2.0" transform="rotate(-45 2146.80 403.00)"><rect x="2143.00" y="391.50" width="7.60" height="13.00" rx="3.80"/><rect x="2143.00" y="401.50" width="7.60" height="13.00" rx="3.80"/></g>
<rect x="2177.1" y="383.7" width="39" height="38.3" rx="6" fill="#fff" stroke="#e3ddf8" stroke-width="1"/>
<g fill="none" stroke="#453d66" stroke-width="2.0" stroke-linecap="round"><rect x="2188.00" y="395.70" width="5.20" height="4.80"/><line x1="2196.30" y1="395.80" x2="2205.00" y2="395.80"/><line x1="2196.30" y1="400.30" x2="2205.00" y2="400.30"/><line x1="2187.70" y1="405.30" x2="2205.00" y2="405.30"/><line x1="2187.70" y1="410.00" x2="2205.00" y2="410.00"/></g>
<rect x="1750.7" y="457.0" width="466.3" height="59.3" fill="#fff" rx="12"/>
<g fill="none" stroke="#111" stroke-width="2.4"><circle cx="1781" cy="485" r="6"/><line x1="1785.3" y1="489.5" x2="1791.5" y2="495.5"/></g>
<text x="1805.6" y="492.3" font-size="16" fill="#9d9aae" textLength="110.8" lengthAdjust="spacingAndGlyphs">Search analytics</text>
<g stroke="#222" stroke-width="2.3"><line x1="2180.5" y1="480.5" x2="2192.5" y2="492.5"/><line x1="2192.5" y1="480.5" x2="2180.5" y2="492.5"/></g>
<path d="M1750.7,526.5 L1966.5,526.5 L1979,548.3 L1966.5,570 L1750.7,570 Z" fill="#4f38c0"/>
<path d="M1977,526.5 L2204.7,526.5 L2217.6,548.3 L2204.7,570 L1977,570 L1989.4,548.3 Z" fill="#4f38c0"/>
<text x="1759.0" y="551.2" font-size="18" fill="#fff" textLength="144.7" lengthAdjust="spacingAndGlyphs">Banking Analytics</text>
<text x="1997.4" y="551.2" font-size="18" fill="#fff" textLength="193.6" lengthAdjust="spacingAndGlyphs">Management Summary</text>
<clipPath id="tabclip"><rect x="1741" y="580" width="476.5" height="50"/></clipPath>
<g clip-path="url(#tabclip)">
<text x="1771.0" y="608.9" font-size="17.5" fill="#5440c6" textLength="124" lengthAdjust="spacingAndGlyphs">Asset Products</text>
<text x="1945.8" y="608.9" font-size="17.5" fill="#5440c6" textLength="144.5" lengthAdjust="spacingAndGlyphs">Liability Products</text>
<text x="2142.0" y="608.9" font-size="17.5" fill="#5440c6" textLength="110" lengthAdjust="spacingAndGlyphs">Relationship</text>
</g>
<rect x="1750.7" y="619.0" width="466.3" height="2.0" fill="#e4e4e4"/>
<rect x="1750.7" y="616.3" width="165.0" height="3.0" fill="#5440c6"/>
<rect x="1750.7" y="631.4" width="466.3" height="427.6" fill="#fff"/>
<text x="1780.8" y="651.4" font-size="19" fill="#111" textLength="331.7" lengthAdjust="spacingAndGlyphs">Accounts across Delinquency Buckets</text>
<rect x="2172.7" y="678" width="28.8" height="28.8" rx="6" fill="#fff" stroke="#c4c4c4" stroke-width="1"/>
<g stroke="#8a8a8a" stroke-width="1.3"><line x1="2179.5" y1="686.6" x2="2194.5" y2="686.6"/><line x1="2179.5" y1="692.4" x2="2194.5" y2="692.4"/><line x1="2179.5" y1="698" x2="2194.5" y2="698"/></g>
<line x1="1844.3" y1="870.2" x2="2198.3" y2="870.2" stroke="#eeeeee" stroke-width="1"/>
<text x="1825.5" y="875.5" font-size="15" fill="#222" text-anchor="end">0</text>
<line x1="1844.3" y1="818.6" x2="2198.3" y2="818.6" stroke="#eeeeee" stroke-width="1"/>
<text x="1825.5" y="823.9" font-size="15" fill="#222" text-anchor="end">20</text>
<line x1="1844.3" y1="766.9" x2="2198.3" y2="766.9" stroke="#eeeeee" stroke-width="1"/>
<text x="1825.5" y="772.2" font-size="15" fill="#222" text-anchor="end">40</text>
<line x1="1844.3" y1="715.3" x2="2198.3" y2="715.3" stroke="#eeeeee" stroke-width="1"/>
<text x="1825.5" y="720.6" font-size="15" fill="#222" text-anchor="end">60</text>
<rect x="1847.3" y="865.0" width="23.5" height="5.2" fill="#5c5fb2"/>
<rect x="1847.3" y="862.5" width="23.5" height="2.6" fill="#35c2bd"/>
<text x="1859.0" y="854.0" font-size="15" fill="#111" text-anchor="middle">3</text>
<text transform="translate(1863.0,882) rotate(-60)" font-size="14" fill="#222" text-anchor="end">Chhatishgarh</text>
<rect x="1877.2" y="852.1" width="22.4" height="18.1" fill="#5c5fb2"/>
<rect x="1877.2" y="839.2" width="22.4" height="12.9" fill="#35c2bd"/>
<rect x="1877.2" y="836.6" width="22.4" height="2.6" fill="#ee6d6d"/>
<rect x="1877.2" y="834.1" width="22.4" height="2.6" fill="#ffc533"/>
<text x="1888.4" y="825.6" font-size="15" fill="#111" text-anchor="middle">14</text>
<text transform="translate(1892.4,882) rotate(-60)" font-size="14" fill="#222" text-anchor="end">Delhi</text>
<rect x="1906.0" y="852.1" width="23.5" height="18.1" fill="#5c5fb2"/>
<rect x="1906.0" y="848.3" width="23.5" height="3.9" fill="#35c2bd"/>
<rect x="1906.0" y="845.7" width="23.5" height="2.6" fill="#ee6d6d"/>
<rect x="1906.0" y="831.5" width="23.5" height="14.2" fill="#ffc533"/>
<text x="1917.8" y="823.0" font-size="15" fill="#111" text-anchor="middle">15</text>
<text transform="translate(1921.8,882) rotate(-60)" font-size="14" fill="#222" text-anchor="end">Gujarat</text>
<rect x="1936.0" y="867.6" width="23.4" height="2.6" fill="#5c5fb2"/>
<rect x="1936.0" y="865.0" width="23.4" height="2.6" fill="#ee6d6d"/>
<rect x="1936.0" y="862.5" width="23.4" height="2.6" fill="#ffc533"/>
<text x="1947.7" y="854.0" font-size="15" fill="#111" text-anchor="middle">3</text>
<text transform="translate(1951.7,882) rotate(-60)" font-size="14" fill="#222" text-anchor="end">Jharkhand</text>
<rect x="1966.0" y="839.2" width="22.0" height="31.0" fill="#5c5fb2"/>
<rect x="1966.0" y="821.1" width="22.0" height="18.1" fill="#35c2bd"/>
<rect x="1966.0" y="810.8" width="22.0" height="10.3" fill="#ee6d6d"/>
<rect x="1966.0" y="759.2" width="22.0" height="51.6" fill="#ffc533"/>
<text x="1977.0" y="750.7" font-size="15" fill="#111" text-anchor="middle">43</text>
<text transform="translate(1981.0,882) rotate(-60)" font-size="14" fill="#222" text-anchor="end">Maharashtra</text>
<rect x="1994.7" y="859.9" width="23.3" height="10.3" fill="#5c5fb2"/>
<rect x="1994.7" y="848.8" width="23.3" height="11.1" fill="#35c2bd"/>
<rect x="1994.7" y="841.8" width="23.3" height="7.0" fill="#ee6d6d"/>
<rect x="1994.7" y="823.7" width="23.3" height="18.1" fill="#ffc533"/>
<text x="2006.3" y="815.2" font-size="15" fill="#111" text-anchor="middle">18</text>
<text transform="translate(2010.3,882) rotate(-60)" font-size="14" fill="#222" text-anchor="end">MP</text>
<rect x="2024.6" y="854.7" width="23.4" height="15.5" fill="#5c5fb2"/>
<rect x="2024.6" y="852.1" width="23.4" height="2.6" fill="#35c2bd"/>
<rect x="2024.6" y="848.3" width="23.4" height="3.9" fill="#ee6d6d"/>
<rect x="2024.6" y="847.0" width="23.4" height="1.3" fill="#ffc533"/>
<text x="2036.3" y="838.5" font-size="15" fill="#111" text-anchor="middle">9</text>
<text transform="translate(2040.3,882) rotate(-60)" font-size="14" fill="#222" text-anchor="end">Punjab</text>
<rect x="2054.5" y="865.0" width="22.3" height="5.2" fill="#5c5fb2"/>
<rect x="2054.5" y="859.9" width="22.3" height="5.2" fill="#35c2bd"/>
<rect x="2054.5" y="852.1" width="22.3" height="7.7" fill="#ffc533"/>
<text x="2065.7" y="843.6" font-size="15" fill="#111" text-anchor="middle">7</text>
<text transform="translate(2069.7,882) rotate(-60)" font-size="14" fill="#222" text-anchor="end">Rajasthan</text>
<rect x="2083.4" y="852.1" width="23.3" height="18.1" fill="#5c5fb2"/>
<rect x="2083.4" y="841.0" width="23.3" height="11.1" fill="#35c2bd"/>
<rect x="2083.4" y="823.7" width="23.3" height="17.3" fill="#ee6d6d"/>
<rect x="2083.4" y="803.1" width="23.3" height="20.7" fill="#ffc533"/>
<text x="2095.1" y="794.6" font-size="15" fill="#111" text-anchor="middle">26</text>
<text transform="translate(2099.1,882) rotate(-60)" font-size="14" fill="#222" text-anchor="end">UP</text>
<rect x="2113.3" y="867.6" width="23.3" height="2.6" fill="#ee6d6d"/>
<text x="2124.9" y="859.1" font-size="15" fill="#111" text-anchor="middle">1</text>
<text transform="translate(2128.9,882) rotate(-60)" font-size="14" fill="#222" text-anchor="end">Haryana</text>
<rect x="2143.2" y="867.6" width="22.0" height="2.6" fill="#ffc533"/>
<text x="2154.2" y="859.1" font-size="15" fill="#111" text-anchor="middle">1</text>
<text transform="translate(2158.2,882) rotate(-60)" font-size="14" fill="#222" text-anchor="end">Bihar</text>
<rect x="2172.0" y="867.6" width="23.0" height="2.6" fill="#ffc533"/>
<text x="2183.5" y="859.1" font-size="15" fill="#111" text-anchor="middle">1</text>
<text transform="translate(2187.5,882) rotate(-60)" font-size="14" fill="#222" text-anchor="end">Uttarakhand</text>
<text transform="translate(1787,793) rotate(-90)" font-size="17" fill="#aaa" text-anchor="middle" textLength="141" lengthAdjust="spacingAndGlyphs">Overdue Accounts</text>
<text x="1927.7" y="997.5" font-size="17" fill="#9a9a9a" textLength="185.5" lengthAdjust="spacingAndGlyphs">State,Delinquency Band</text>
<rect x="1782.8" y="1024.3" width="11.5" height="11.4" fill="#5c5fb2"/>
<text x="1803.5" y="1035.0" font-size="14" fill="#9a9a9a" textLength="73.3" lengthAdjust="spacingAndGlyphs">1 to 30 Days</text>
<rect x="1902.5" y="1024.3" width="11.5" height="11.4" fill="#35c2bd"/>
<text x="1922.6" y="1035.0" font-size="14" fill="#9a9a9a" textLength="81.5" lengthAdjust="spacingAndGlyphs">31 to 60 Days</text>
<rect x="2030.0" y="1024.3" width="11.5" height="11.4" fill="#ee6d6d"/>
<text x="2049.5" y="1035.0" font-size="14" fill="#9a9a9a" textLength="81.5" lengthAdjust="spacingAndGlyphs">61 to 90 Days</text>
<rect x="2157.3" y="1024.3" width="11.5" height="11.4" fill="#ffc533"/>
<text x="2177.3" y="1035.0" font-size="14" fill="#9a9a9a" textLength="80" lengthAdjust="spacingAndGlyphs">Fresh Bucket</text>
<rect x="2217.0" y="631.4" width="10.0" height="430.0" fill="#f4f4f4"/>
<rect x="1750.7" y="1059.0" width="466.3" height="46.5" fill="#ece7fc"/>
<g fill="none" stroke="#453d66" stroke-width="2.0"><path d="M1779.41,1084.94 A8.60,8.60 0 0 1 1795.30,1089.50"/><path d="M1794.15,1093.80 A8.60,8.60 0 0 1 1778.10,1089.50"/><path d="M1795.30,1090.00 L1795.30,1081.20"/><path d="M1778.10,1089.00 L1778.10,1097.20"/></g>
<circle cx="1847.7" cy="1089.8" r="8.6" fill="none" stroke="#453d66" stroke-width="2"/><path d="M1847.2,1084 L1847.2,1090 L1851.3,1094" fill="none" stroke="#453d66" stroke-width="2"/>
<path d="M1900.5,1082 L1916.5,1082 L1910,1089.5 L1910,1097.5 L1907,1095.5 L1907,1089.5 Z" fill="none" stroke="#453d66" stroke-width="2" stroke-linejoin="round"/>
<text x="1961.0" y="1095.3" font-size="17" fill="#453d66" font-weight="bold" textLength="23.7" lengthAdjust="spacingAndGlyphs">DD</text>
<path d="M1996,1087 L2001.5,1081.5 L2007,1087 M1996,1091.5 L2001.5,1097 L2007,1091.5" fill="none" stroke="#4d4d4d" stroke-width="2"/>
<path d="M2056.5,1087 L2056.5,1081.3 L2062,1081.3 M2068.5,1081.3 L2073.6,1081.3 L2073.6,1087 M2073.6,1092 L2073.6,1097.3 L2068.5,1097.3 M2062,1097.3 L2056.5,1097.3 L2056.5,1092" fill="none" stroke="#453d66" stroke-width="2"/>
<circle cx="2188.7" cy="1081.5" r="2.3" fill="#453d66"/><circle cx="2188.7" cy="1089.3" r="2.3" fill="#453d66"/><circle cx="2188.7" cy="1097" r="2.3" fill="#453d66"/>
<rect x="1741.0" y="1105.3" width="486.0" height="60.0" fill="url(#navg)"/>
<g fill="none" stroke="#fff" stroke-width="2" stroke-linejoin="round"><path d="M1791,1160 L1791,1148 L1800,1141.5 L1809,1148 L1809,1160"/><rect x="1797" y="1150" width="6" height="6"/><path d="M1971,1141.5 L1988,1141.5 L1981,1150 L1981,1160 L1978,1158 L1978,1150 Z"/><path d="M2165,1142 L2153,1142 L2153,1160 L2165,1160 M2158,1151 L2174,1151 M2169,1146 L2174,1151 L2169,1156"/></g>
</g>
</svg>
</div>
</body></html>
